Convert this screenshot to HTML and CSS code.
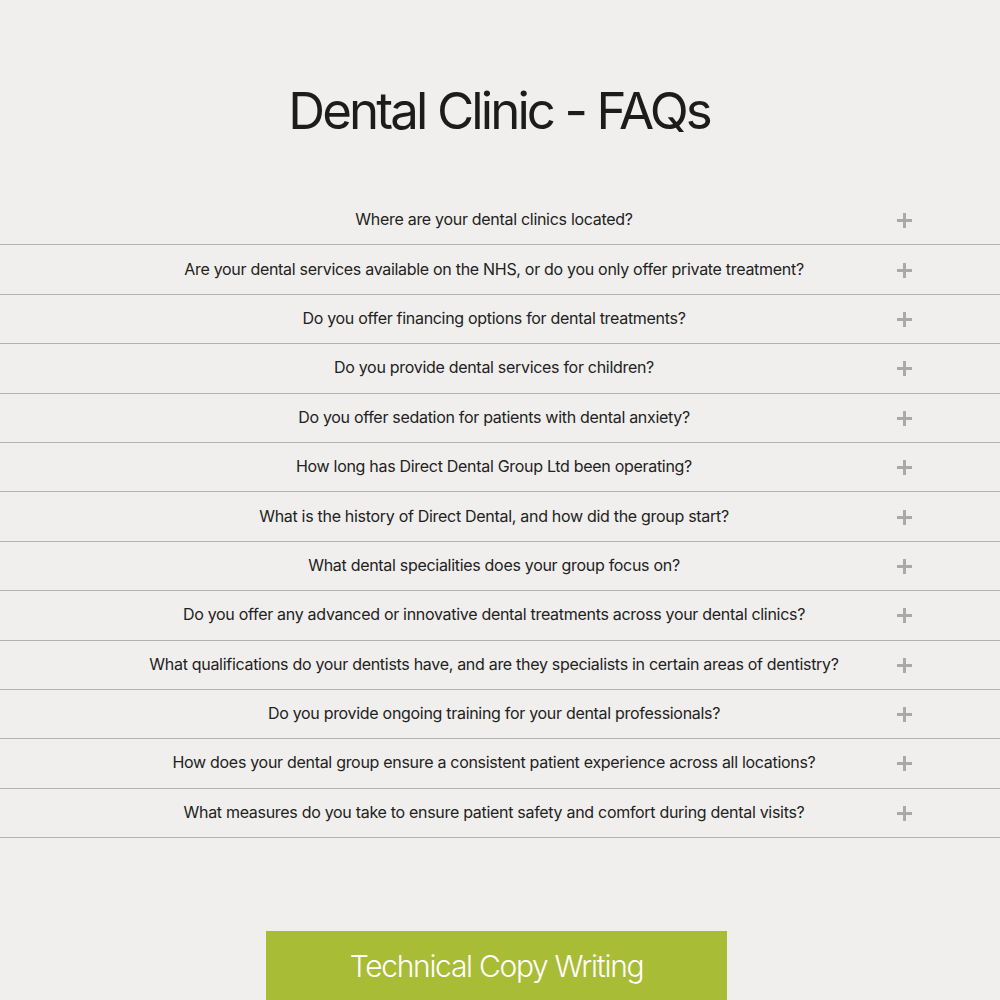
FILE: index.html
```html
<!DOCTYPE html>
<html lang="en">
<head>
<meta charset="utf-8">
<title>Dental Clinic - FAQs</title>
<link rel="stylesheet" href="styles.css">
</head>
<body>
<main class="page">
  <h1 class="title">Dental Clinic - FAQs</h1>
  <section class="faq">
    <div class="faq-row"><span class="q">Where are your dental clinics located?</span><span class="plus"></span></div>
    <div class="faq-row"><span class="q">Are your dental services available on the NHS, or do you only offer private treatment?</span><span class="plus"></span></div>
    <div class="faq-row"><span class="q">Do you offer financing options for dental treatments?</span><span class="plus"></span></div>
    <div class="faq-row"><span class="q">Do you provide dental services for children?</span><span class="plus"></span></div>
    <div class="faq-row"><span class="q">Do you offer sedation for patients with dental anxiety?</span><span class="plus"></span></div>
    <div class="faq-row"><span class="q">How long has Direct Dental Group Ltd been operating?</span><span class="plus"></span></div>
    <div class="faq-row"><span class="q">What is the history of Direct Dental, and how did the group start?</span><span class="plus"></span></div>
    <div class="faq-row"><span class="q">What dental specialities does your group focus on?</span><span class="plus"></span></div>
    <div class="faq-row"><span class="q">Do you offer any advanced or innovative dental treatments across your dental clinics?</span><span class="plus"></span></div>
    <div class="faq-row"><span class="q">What qualifications do your dentists have, and are they specialists in certain areas of dentistry?</span><span class="plus"></span></div>
    <div class="faq-row"><span class="q">Do you provide ongoing training for your dental professionals?</span><span class="plus"></span></div>
    <div class="faq-row"><span class="q">How does your dental group ensure a consistent patient experience across all locations?</span><span class="plus"></span></div>
    <div class="faq-row"><span class="q">What measures do you take to ensure patient safety and comfort during dental visits?</span><span class="plus"></span></div>
  </section>
  <div class="cta-wrap">
    <a class="cta" href="#">Technical Copy Writing</a>
  </div>
</main>
</body>
</html>
```
FILE: styles.css
```css
html, body {
  margin: 0;
  padding: 0;
  background: #f0efed;
}
body {
  font-family: Inter, "Noto Sans", sans-serif;
  color: #1e1e1e;
}
.page {
  padding-top: 80px;
}
.title {
  margin: 0;
  text-align: center;
  font-size: 51px;
  font-weight: 400;
  line-height: 62px;
  letter-spacing: -2.9px;
  color: #1c1c1c;
  padding-right: 2px;
}
.faq {
  margin-top: 54px;
}
.faq-row {
  position: relative;
  height: 48.4px;
  border-bottom: 1px solid #b3b3b1;
  display: flex;
  align-items: center;
  justify-content: center;
  padding-right: 12px;
}
.q {
  font-size: 16px;
  letter-spacing: -0.3px;
  color: #222;
  padding-bottom: 2px;
}
.plus {
  position: absolute;
  right: 88px;
  top: 50%;
  width: 15px;
  height: 15px;
  margin-top: -7px;
}
.plus::before, .plus::after {
  content: "";
  position: absolute;
  background: #a9a9a9;
}
.plus::before {
  left: 0;
  right: 0;
  top: 6px;
  height: 3px;
}
.plus::after {
  top: 0;
  bottom: 0;
  left: 6px;
  width: 3px;
}
.cta-wrap {
  display: flex;
  justify-content: center;
  margin-top: 93px;
  padding-right: 7px;
}
.cta {
  display: block;
  width: 461px;
  height: 72px;
  background: #a9bc35;
  color: #ffffff;
  text-decoration: none;
  text-align: center;
  font-size: 30px;
  font-weight: 300;
  line-height: 70px;
  letter-spacing: -1.3px;
}
```
